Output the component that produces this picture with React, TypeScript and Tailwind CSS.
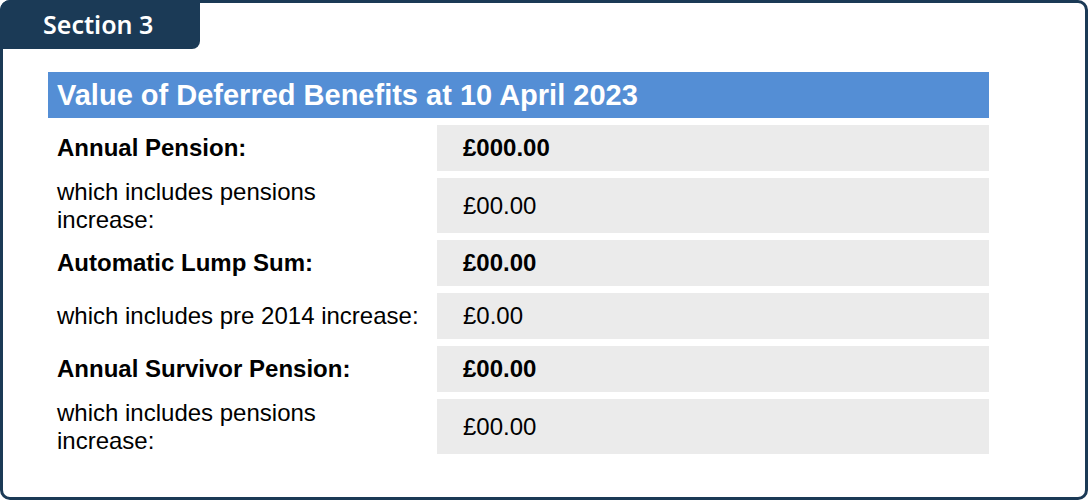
const ROWS = [
  { label: ["Annual Pension:"], value: "£000.00", strong: true, tall: false },
  { label: ["which includes pensions", "increase:"], value: "£00.00", strong: false, tall: true },
  { label: ["Automatic Lump Sum:"], value: "£00.00", strong: true, tall: false },
  { label: ["which includes pre 2014 increase:"], value: "£0.00", strong: false, tall: false },
  { label: ["Annual Survivor Pension:"], value: "£00.00", strong: true, tall: false },
  { label: ["which includes pensions", "increase:"], value: "£00.00", strong: false, tall: true },
];

export default function App() {
  return (
    <div className="h-[500px] w-[1088px] bg-white">
      <section className="flex h-[500px] w-[1088px] flex-col rounded-[10px] border-[3px] border-[#1b3a56] bg-white">
        <div className="-ml-[3px] -mt-[3px] flex h-[49px] w-[200px] items-center rounded-tl-[10px] rounded-br-[8px] bg-[#1b3a56] pl-[43px] font-['Noto_Sans',sans-serif] text-[25px] font-semibold leading-none text-white">
          Section 3
        </div>

        <div className="ml-[45px] mt-[23px] w-[941px]">
          <h2 className="flex h-[46px] items-center bg-[#548ed5] pl-[9px] font-['Liberation_Sans',Arial,sans-serif] text-[29px] font-bold leading-none text-white">
            Value of Deferred Benefits at 10 April 2023
          </h2>

          <div className="mt-[7px] flex flex-col gap-[7px] font-['Liberation_Sans',Arial,sans-serif] text-[24px] leading-[28px] text-black">
            {ROWS.map((row, i) => (
              <div key={i} className={`flex ${row.tall ? "h-[55px]" : "h-[46px]"}`}>
                <div
                  className={`flex w-[389px] flex-col justify-center whitespace-nowrap pl-[9px] ${row.strong ? "font-bold" : ""}`}
                >
                  {row.label.map((line) => (
                    <span key={line}>{line}</span>
                  ))}
                </div>
                <div
                  className={`flex flex-1 items-center bg-[#ebebeb] pl-[26px] ${row.strong ? "font-bold" : ""}`}
                >
                  {row.value}
                </div>
              </div>
            ))}
          </div>
        </div>
      </section>
    </div>
  );
}
